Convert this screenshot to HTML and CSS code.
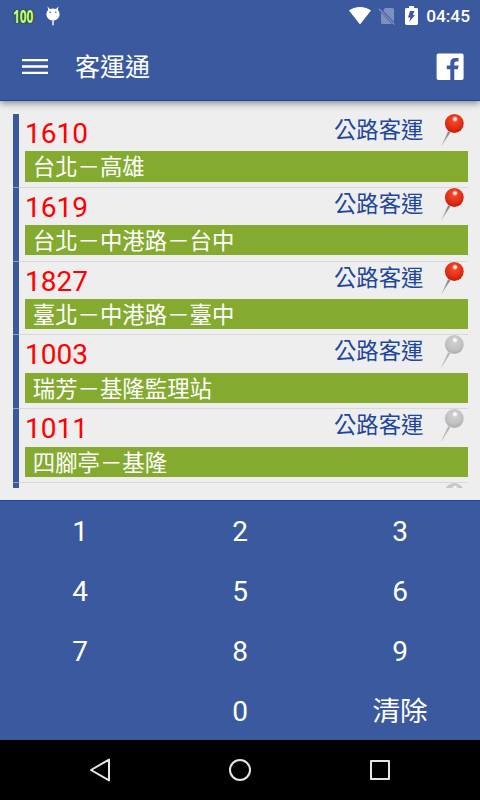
FILE: index.html
```html
<!DOCTYPE html>
<html lang="zh-TW">
<head>
    <meta charset="UTF-8">
    <meta name="viewport" content="width=device-width, initial-scale=1.0">
    <title>客運通</title>
    <link rel="stylesheet" href="styles.css">
</head>
<body>
    <svg class="defs" width="0" height="0">
        <defs>
            <radialGradient id="redHead" cx="0.5" cy="0.35" r="0.65">
                <stop offset="0" stop-color="#f5502c"/>
                <stop offset="0.6" stop-color="#e63016"/>
                <stop offset="1" stop-color="#c41c0c"/>
            </radialGradient>
            <radialGradient id="grayHead" cx="0.5" cy="0.35" r="0.65">
                <stop offset="0" stop-color="#d0d0d0"/>
                <stop offset="0.6" stop-color="#c4c4c4"/>
                <stop offset="1" stop-color="#adadad"/>
            </radialGradient>
            <radialGradient id="shine">
                <stop offset="0" stop-color="#fff"/>
                <stop offset="0.4" stop-color="#fff" stop-opacity="0.85"/>
                <stop offset="1" stop-color="#fff" stop-opacity="0"/>
            </radialGradient>
            <linearGradient id="redNeedle" x1="1" y1="0" x2="0" y2="1">
                <stop offset="0" stop-color="#777f88"/>
                <stop offset="1" stop-color="#c4c7ca"/>
            </linearGradient>
            <symbol id="pin-red" viewBox="0 0 26 34">
                <path d="M8.100 17.200L10.300 18.600L0.800 33.200z" fill="url(#redNeedle)"/>
                <circle cx="14.300" cy="9.500" r="9.400" fill="url(#redHead)"/>
                <circle cx="15" cy="5.100" r="3" fill="url(#shine)"/>
            </symbol>
            <symbol id="pin-gray" viewBox="0 0 26 34">
                <path d="M8.100 17.200L10.300 18.600L0.800 33.200z" fill="#b5b5b5"/>
                <circle cx="14.300" cy="9.500" r="9.400" fill="url(#grayHead)"/>
                <circle cx="15" cy="5.100" r="3" fill="url(#shine)"/>
            </symbol>
        </defs>
    </svg>

    <header class="top">
        <div class="status-bar">
            <span class="battery-level">100</span>
            <svg class="debug-icon" width="16" height="22" viewBox="0 0 16 22">
                <path d="M2.500 0.500L5 3Q8 1.900 11 3L13.500 0.500L12.800 4Q14.600 5.600 14.600 8.300C14.600 12 11.500 14.600 8 14.600S1.400 12 1.400 8.300Q1.400 5.600 3.200 4z" fill="#fff"/>
                <circle cx="5.200" cy="6.200" r="0.800" fill="#3b599f"/>
                <circle cx="10.800" cy="6.200" r="0.800" fill="#3b599f"/>
                <path d="M8 14.400v4.800" stroke="#fff" stroke-width="1.400"/>
            </svg>
            <svg class="wifi-icon" width="22" height="18" viewBox="0 0 22 18">
                <path d="M0 3.600Q4.600 0 11 0T22 3.600L11 17.600z" fill="#fff"/>
            </svg>
            <svg class="sim-icon" width="18" height="18" viewBox="0 0 18 18">
                <path d="M7 1H14.500Q16 1 16 2.500V15L5.200 3.700z" fill="#7d90c0"/>
                <path d="M3 5.500L14 17H4.500Q3 17 3 15.500z" fill="#7d90c0"/>
                <path d="M1 2L16.500 17.500" stroke="#7d90c0" stroke-width="1.300"/>
            </svg>
            <svg class="charge-icon" width="13" height="20" viewBox="0 0 13 20">
                <path d="M4 0H9V2H11.500Q13 2 13 3.400V17.600Q13 19 11.500 19H1.500Q0 19 0 17.600V3.400Q0 2 1.500 2H4z" fill="#fff"/>
                <path d="M5 5H9.500L7.800 9H10L4.200 16L5.400 11.500H3z" fill="#3b599f"/>
            </svg>
            <span class="clock">04:45</span>
        </div>
        <div class="app-bar">
            <svg class="menu-icon" width="26" height="18" viewBox="0 0 26 18">
                <path d="M0 2.200H26M0 8.500H26M0 14.800H26" stroke="#fff" stroke-width="2.300"/>
            </svg>
            <h1 class="title">客運通</h1>
            <svg class="facebook-icon" width="28" height="28" viewBox="0 0 28 28">
                <path d="M2.300 0.500H25.800Q27.600 0.500 27.600 2.300V25.200Q27.600 27 25.800 27H18.300V16.200H21.900L22.600 12.600H18.300V10.300Q18.300 8.600 20 8.600H22.500V5H19.400Q14.300 5 14.300 9.700V12.600H10.800V16.200H14.300V27H2.300Q0.600 27 0.600 25.200V2.300Q0.600 0.500 2.300 0.500z" fill="#fff"/>
            </svg>
        </div>
    </header>

    <main class="list">
        <div class="route">
            <div class="route-head">
                <span class="number">1610</span>
                <span class="company">公路客運</span>
                <svg class="pin"><use href="#pin-red"/></svg>
            </div>
            <div class="path">台北－高雄</div>
        </div>
        <div class="route">
            <div class="route-head">
                <span class="number">1619</span>
                <span class="company">公路客運</span>
                <svg class="pin"><use href="#pin-red"/></svg>
            </div>
            <div class="path">台北－中港路－台中</div>
        </div>
        <div class="route">
            <div class="route-head">
                <span class="number">1827</span>
                <span class="company">公路客運</span>
                <svg class="pin"><use href="#pin-red"/></svg>
            </div>
            <div class="path">臺北－中港路－臺中</div>
        </div>
        <div class="route">
            <div class="route-head">
                <span class="number">1003</span>
                <span class="company">公路客運</span>
                <svg class="pin"><use href="#pin-gray"/></svg>
            </div>
            <div class="path">瑞芳－基隆監理站</div>
        </div>
        <div class="route">
            <div class="route-head">
                <span class="number">1011</span>
                <span class="company">公路客運</span>
                <svg class="pin"><use href="#pin-gray"/></svg>
            </div>
            <div class="path">四腳亭－基隆</div>
        </div>
        <div class="route">
            <div class="route-head">
                <svg class="pin"><use href="#pin-gray"/></svg>
            </div>
        </div>
    </main>

    <div class="keypad">
        <button>1</button>
        <button>2</button>
        <button>3</button>
        <button>4</button>
        <button>5</button>
        <button>6</button>
        <button>7</button>
        <button>8</button>
        <button>9</button>
        <span></span>
        <button>0</button>
        <button class="clear">清除</button>
    </div>

    <nav class="nav-bar">
        <svg width="24" height="26" viewBox="0 0 24 26">
            <path d="M21 2.600V23.400L3 13z" fill="none" stroke="#e6e6e6" stroke-width="2" stroke-linejoin="round"/>
        </svg>
        <svg width="24" height="24" viewBox="0 0 24 24">
            <circle cx="12" cy="12" r="10" fill="none" stroke="#e6e6e6" stroke-width="2"/>
        </svg>
        <svg width="24" height="24" viewBox="0 0 24 24">
            <rect x="3" y="3" width="18" height="18" fill="none" stroke="#e6e6e6" stroke-width="2" stroke-linejoin="round"/>
        </svg>
    </nav>
</body>
</html>
```

FILE: styles.css
```css
* {
    box-sizing: border-box;
}

body {
    display: flex;
    flex-direction: column;
    width: 480px;
    height: 800px;
    margin: 0;
    overflow: hidden;
    background-color: #eee;
    font-family: Roboto, "Noto Sans CJK TC", sans-serif;
}

svg {
    display: block;
    flex: none;
}

.defs {
    position: absolute;
}

.top {
    flex: none;
    height: 101px;
    background-color: #3b599f;
    border-bottom: 1px solid #1c479c;
    color: white;
    box-shadow: 0 2px 7px rgba(0, 0, 0, 0.45);
}

.status-bar {
    display: flex;
    align-items: flex-start;
    height: 36px;
    padding: 6px 10px 0 12.5px;
}

.battery-level {
    width: 22px;
    font-family: "Open Sans", Roboto, sans-serif;
    font-size: 18px;
    font-weight: bold;
    line-height: 20px;
    color: #d4f98c;
    text-shadow: 0 0 1px #175c00, 0 0 2px #175c00, 0 0 2px #175c00;
    transform: scaleX(0.66);
    transform-origin: left;
}

.debug-icon {
    margin-left: 10px;
}

.wifi-icon {
    margin: 1px 0 0 auto;
}

.sim-icon {
    margin: 1px 0 0 7px;
}

.charge-icon {
    margin-left: 9.5px;
}

.clock {
    margin-left: 8px;
    font-size: 17.3px;
    font-weight: 500;
    line-height: 21px;
}

.app-bar {
    display: flex;
    align-items: center;
    height: 60px;
    padding: 0 16px 0 22px;
}

.menu-icon {
    margin-top: 1px;
}

.title {
    margin: -2px auto 0 27px;
    font-size: 25px;
    font-weight: 400;
}

.facebook-icon {
    margin-top: 1px;
}

.list {
    flex: none;
    height: 373.5px;
    margin: 13px 12.5px 12.5px;
    overflow: hidden;
}

.route {
    height: 73.8px;
    padding-left: 6px;
    border-left: 6.5px solid #3b599f;
    box-shadow: inset 0 -1px #d8d8d8;
    border-image: linear-gradient(to top, #8d9fc7 1px, #3b599f 1px) 0 0 0 1;
}

.route-head {
    display: flex;
    height: 37.4px;
}

.number {
    padding-left: 0.5px;
    font-size: 28px;
    line-height: 39px;
    color: red;
}

.company {
    margin-left: auto;
    font-size: 22.4px;
    line-height: 32px;
    color: #1f479b;
}

.pin {
    width: 26px;
    height: 34px;
    margin: 0 2px 0 16px;
}

.route-head > .pin:first-child {
    margin-left: auto;
}

.path {
    height: 30.3px;
    padding-left: 8.3px;
    background-color: #84ab30;
    font-size: 22.4px;
    line-height: 33px;
    color: white;
}

.keypad {
    display: grid;
    flex: none;
    grid-template-columns: repeat(3, 1fr);
    grid-template-rows: repeat(4, 60px);
    height: 240px;
    background-color: #3b599f;
    box-shadow: inset 0 1px #1547a0;
}

.keypad button {
    padding: 2px 0 0;
    border: none;
    background: none;
    color: white;
    font-family: inherit;
    font-size: 28px;
}

.keypad .clear {
    font-size: 27.5px;
    padding: 0 0 3px;
}

.nav-bar {
    display: flex;
    flex: 1;
    align-items: center;
    justify-content: space-between;
    padding: 0 88px;
    background-color: black;
}
```
